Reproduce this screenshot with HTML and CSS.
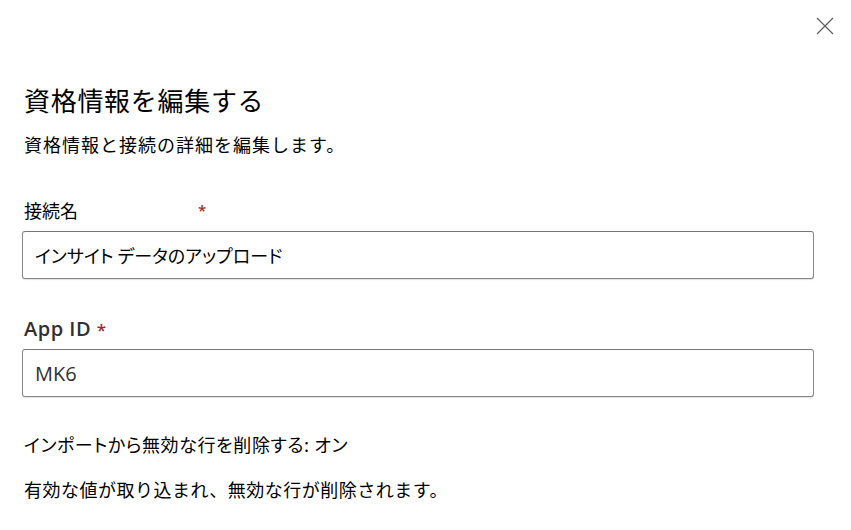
FILE: index.html
```html
<!DOCTYPE html>
<html lang="ja">
<head>
<meta charset="utf-8">
<title>資格情報を編集する</title>
<link rel="stylesheet" href="styles.css">
</head>
<body>
<div class="panel">
  <div class="close-row">
    <button class="close" aria-label="閉じる">
      <svg width="18" height="18" viewBox="0 0 18 18"><path d="M1 1 L17 17 M17 1 L1 17" stroke="#605e5c" stroke-width="1.2" fill="none"/></svg>
    </button>
  </div>
  <h1 class="title">資格情報を編集する</h1>
  <p class="subtitle">資格情報と接続の詳細を編集します。</p>

  <div class="field-label"><span class="label-text">接続名</span><span class="req req-wide">*</span></div>
  <div class="input input-jp">インサイト データのアップロード</div>

  <div class="app-label">App ID <span class="req">*</span></div>
  <div class="input input-latin">MK6</div>

  <p class="note note-first">インポートから無効な行を削除する: オン</p>
  <p class="note note-second">有効な値が取り込まれ、無効な行が削除されます。</p>
</div>
</body>
</html>
```

FILE: styles.css
```css
html, body {
  margin: 0;
  padding: 0;
  background: #ffffff;
}

body {
  font-family: "Noto Sans CJK JP", "Noto Sans", sans-serif;
  color: #000000;
}

.panel {
  display: flex;
  flex-direction: column;
  padding: 0 37px 0 22px;
}

.close-row {
  display: flex;
  justify-content: flex-end;
  padding-top: 17px;
  margin-right: -20px;
}

.close {
  border: 0;
  background: none;
  padding: 0;
  width: 18px;
  height: 18px;
  display: block;
  cursor: pointer;
}

.close svg {
  display: block;
}

.title {
  margin: 49px 0 0 2px;
  font-size: 26px;
  line-height: 32px;
  font-weight: 400;
  letter-spacing: 0.7px;
  color: #000000;
}

.subtitle {
  margin: 16px 0 0 2px;
  font-size: 18px;
  line-height: 24px;
  letter-spacing: 1px;
}

.field-label {
  margin: 42px 0 0 2px;
  font-size: 18px;
  line-height: 24px;
  display: flex;
  align-items: flex-start;
}

.label-text {
  width: 174px;
}

.req {
  color: #a4262c;
  font-family: "Open Sans", "Noto Sans", sans-serif;
  font-weight: 600;
}

.req-wide {
  font-size: 15px;
  line-height: 24px;
}

.input {
  margin-top: 9px;
  box-sizing: border-box;
  height: 48px;
  border: 1px solid #8a8886;
  border-top-color: #7a7876;
  border-radius: 3px;
  box-shadow: 0 1px 1px rgba(0, 0, 0, 0.12);
  padding: 0 12px 0 12px;
  display: flex;
  align-items: center;
  font-size: 18px;
  color: #000000;
}

.input-jp {
  font-feature-settings: "palt";
}

.input-latin {
  margin-top: 7px;
  font-family: "Open Sans", "Noto Sans", sans-serif;
  font-size: 20px;
  color: #323130;
}

.app-label {
  margin: 38px 0 0 2px;
  font-family: "Open Sans", "Noto Sans", sans-serif;
  font-weight: 600;
  font-size: 20px;
  line-height: 24px;
  letter-spacing: 0.5px;
  color: #323130;
}

.app-label .req {
  font-size: 17px;
}

.note {
  margin: 0 0 0 2px;
  font-size: 18px;
  line-height: 24px;
}

.note-first {
  margin-top: 35px;
  font-feature-settings: "palt";
  letter-spacing: 0.6px;
}

.note-second {
  margin-top: 21px;
  letter-spacing: 0.5px;
}
```
